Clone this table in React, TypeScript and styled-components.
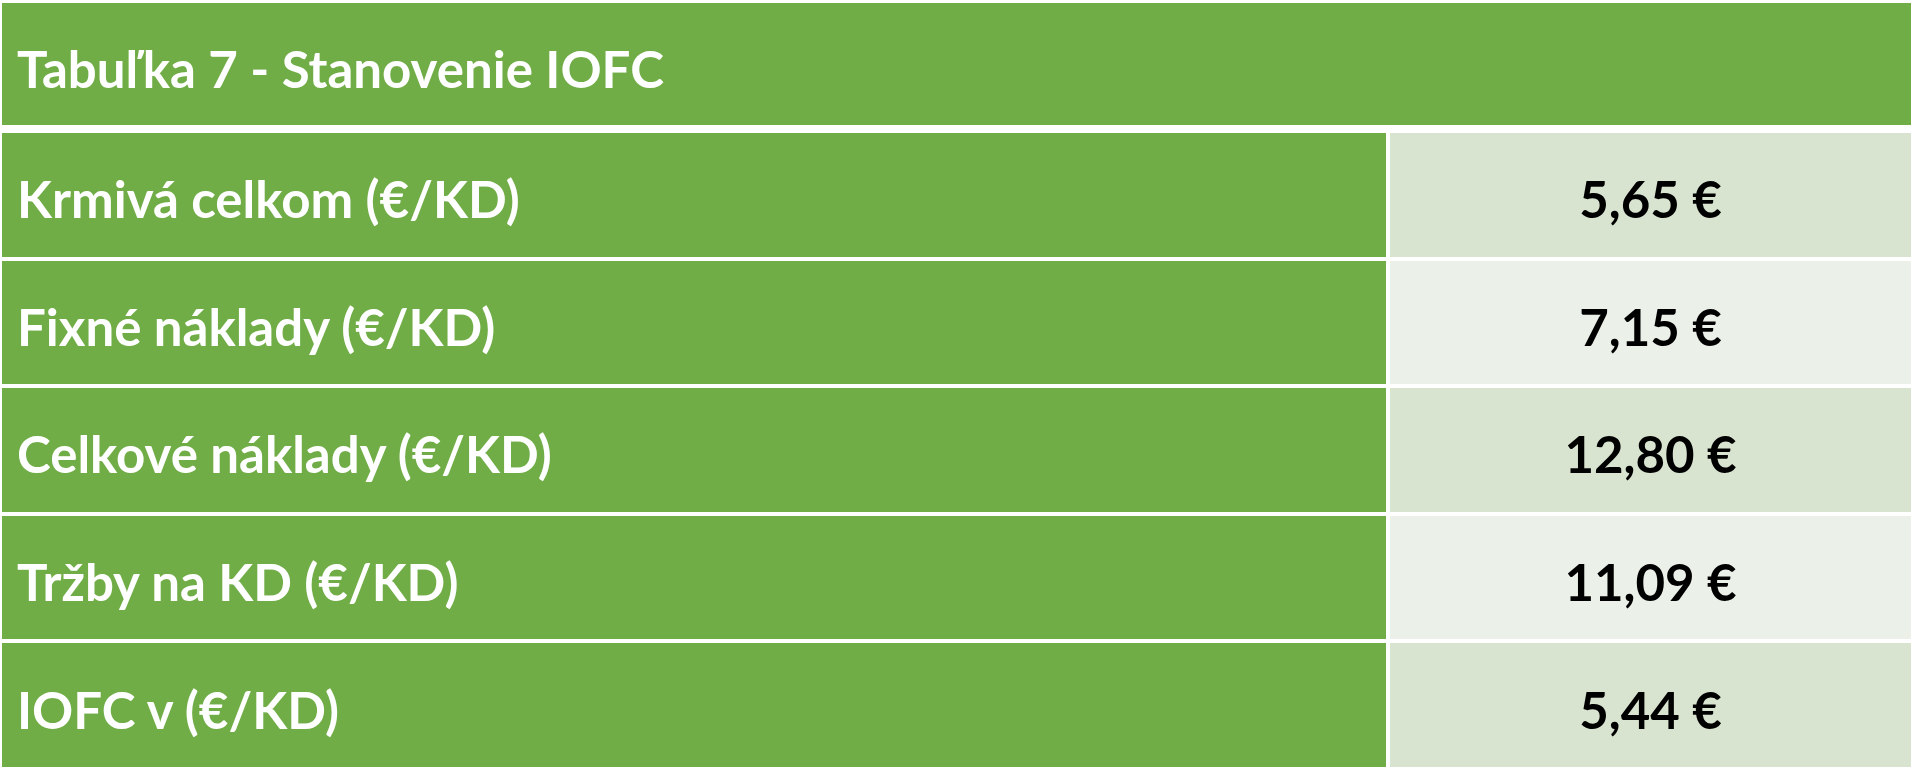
import styled, { createGlobalStyle } from 'styled-components'

const GlobalStyle = createGlobalStyle`
  html, body {
    margin: 0;
    padding: 0;
    background: #ffffff;
  }
`

const rows = [
  { label: 'Krmivá celkom (€/KD)', value: '5,65 €' },
  { label: 'Fixné náklady (€/KD)', value: '7,15 €' },
  { label: 'Celkové náklady (€/KD)', value: '12,80 €' },
  { label: 'Tržby na KD (€/KD)', value: '11,09 €' },
  { label: 'IOFC v (€/KD)', value: '5,44 €' },
]

export default function App() {
  return (
    <>
      <GlobalStyle />
      <Page>
        <Table>
          <Header>Tabuľka 7 - Stanovenie IOFC</Header>
          <Body>
            {rows.map((row, i) => (
              <Row key={row.label}>
                <LabelCell>{row.label}</LabelCell>
                <ValueCell $shade={i % 2 === 0 ? 'dark' : 'light'}>{row.value}</ValueCell>
              </Row>
            ))}
          </Body>
        </Table>
      </Page>
    </>
  )
}

const Page = styled.div`
  width: 1920px;
  height: 776px;
  padding: 3px 9px 9px 2px;
  box-sizing: border-box;
  font-family: Lato, 'Liberation Sans', sans-serif;
  font-weight: 700;
`

const Table = styled.div`
  height: 100%;
  display: flex;
  flex-direction: column;
  gap: 8px;
`

const Header = styled.div`
  height: 122px;
  flex-shrink: 0;
  background: #70ad47;
  color: #ffffff;
  font-size: 51px;
  display: flex;
  align-items: center;
  padding: 8px 0 0 15px;
  box-sizing: border-box;
`

const Body = styled.div`
  flex: 1;
  display: grid;
  grid-template-rows: repeat(5, 1fr);
  gap: 4px;
`

const Row = styled.div`
  display: grid;
  grid-template-columns: 1384px 1fr;
  gap: 4px;
`

const LabelCell = styled.div`
  background: #70ad47;
  color: #ffffff;
  font-size: 51px;
  display: flex;
  align-items: center;
  padding: 8px 0 0 15px;
`

const ValueCell = styled.div<{ $shade: 'dark' | 'light' }>`
  background: ${(p) => (p.$shade === 'dark' ? '#d8e4d0' : '#ebf0e9')};
  color: #000000;
  font-size: 51px;
  display: flex;
  align-items: center;
  justify-content: center;
  padding-top: 8px;
`
